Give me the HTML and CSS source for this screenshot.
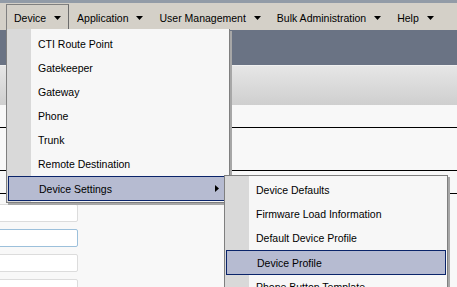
FILE: index.html
```html
<!DOCTYPE html>
<html>
<head>
<meta charset="utf-8">
<link rel="stylesheet" href="styles.css">
</head>
<body>
<div class="page">
  <div class="menubar">
    <div class="mb-item active"><span>Device</span><svg class="caret" width="7" height="4" viewBox="0 0 7 4"><polygon points="0,0 7,0 3.5,4"/></svg></div>
    <div class="mb-item"><span>Application</span><svg class="caret" width="7" height="4" viewBox="0 0 7 4"><polygon points="0,0 7,0 3.5,4"/></svg></div>
    <div class="mb-item"><span>User Management</span><svg class="caret" width="7" height="4" viewBox="0 0 7 4"><polygon points="0,0 7,0 3.5,4"/></svg></div>
    <div class="mb-item"><span>Bulk Administration</span><svg class="caret" width="7" height="4" viewBox="0 0 7 4"><polygon points="0,0 7,0 3.5,4"/></svg></div>
    <div class="mb-item"><span>Help</span><svg class="caret" width="7" height="4" viewBox="0 0 7 4"><polygon points="0,0 7,0 3.5,4"/></svg></div>
  </div>
  <div class="banner"></div>
  <div class="toolbar"></div>
  <div class="rows">
    <div class="row r1"></div>
    <div class="row r2"></div>
    <div class="row r3"></div>
  </div>
  <div class="form">
    <div class="field"></div>
    <div class="field focus"></div>
    <div class="field"></div>
    <div class="field text">"Subscriber Lines" Pr</div>
  </div>

  <div class="menu main-menu">
    <div class="mi">CTI Route Point</div>
    <div class="mi">Gatekeeper</div>
    <div class="mi">Gateway</div>
    <div class="mi">Phone</div>
    <div class="mi">Trunk</div>
    <div class="mi">Remote Destination</div>
    <div class="mi hl"><span>Device Settings</span><svg class="sub-arrow" width="4" height="7" viewBox="0 0 4 7"><polygon points="0,0 4,3.5 0,7"/></svg></div>
  </div>

  <div class="menu sub-menu">
    <div class="mi">Device Defaults</div>
    <div class="mi">Firmware Load Information</div>
    <div class="mi">Default Device Profile</div>
    <div class="mi hl">Device Profile</div>
    <div class="mi">Phone Button Template</div>
  </div>
</div>
</body>
</html>
```

FILE: styles.css
```css
* { box-sizing: border-box; }
html, body { margin: 0; padding: 0; }
body {
  width: 457px;
  height: 287px;
  overflow: hidden;
  background: #f8f8f8;
  font-family: "Liberation Sans", Arial, sans-serif;
  font-size: 10.5px;
  color: #000;
}
.page { position: relative; width: 457px; height: 287px; overflow: hidden; }

.menubar {
  height: 30px;
  border-top: 3px solid #929ba7;
  background: #d4d0c8;
  display: flex;
  align-items: flex-end;
  padding-left: 6px;
}
.mb-item {
  height: 26px;
  display: flex;
  align-items: center;
  gap: 8px;
  padding: 0 7px;
  border: 1px solid transparent;
  border-bottom: 0;
  color: #000;
}
.mb-item.active {
  border-color: #808080;
  border-right-color: #6c6c6c;
}
.caret { display: block; fill: #000; margin-top: 1px; }

.banner { height: 35px; background: #6a7384; }
.toolbar {
  height: 40px;
  border-top: 1px solid #f0f0f0;
  background: linear-gradient(#e6e6e6, #cfcfcf);
}
.rows { display: flex; flex-direction: column; }
.row { border-bottom: 1px solid #000; }
.r1 { height: 23px; }
.r2 { height: 43px; }
.r3 { height: 23px; }

.form {
  display: flex;
  flex-direction: column;
  gap: 7px;
  padding-top: 10px;
  margin-left: -2px;
}
.field {
  width: 80px;
  height: 18px;
  background: #fff;
  border: 1px solid #dcdcdc;
  border-radius: 2px;
}
.field.focus { border-color: #9cc0db; }
.field.text { font-size: 11px; padding: 5px 0 0 2px; white-space: nowrap; overflow: hidden; }

.menu {
  position: absolute;
  width: 224px;
  background: linear-gradient(90deg, #d9d9d9 0, #d9d9d9 24px, #f7f7f7 24px);
  border: 1px solid #7f7f7f;
  box-shadow: 2px 2px 0 #a7a7a7;
  padding: 2px 0 1px;
}
.main-menu { left: 6px; top: 29px; height: 174px; border-top: 0; padding-top: 3px; }
.sub-menu { left: 224px; top: 175px; height: 140px; }
.mi {
  height: 24px;
  display: flex;
  align-items: center;
  padding-left: 31px;
  white-space: nowrap;
}
.mi.hl {
  height: 25px;
  margin: 0 1px;
  padding-left: 30px;
  background: #b6bbd1;
  border: 1px solid #0a246a;
  justify-content: space-between;
  padding-right: 8px;
}
.sub-arrow { display: block; fill: #000; }
```
